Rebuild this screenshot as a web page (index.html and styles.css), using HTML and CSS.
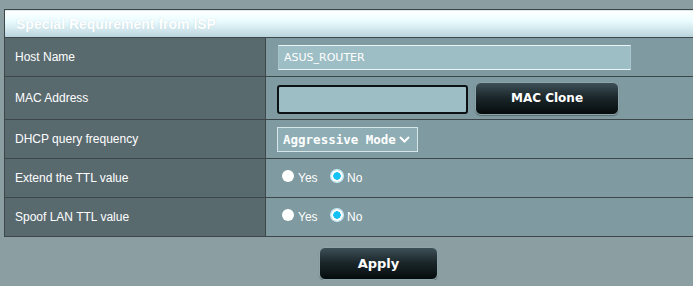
FILE: index.html
```html
<!DOCTYPE html>
<html lang="en">
<head>
    <meta charset="UTF-8">
    <title>WAN - Special Requirement from ISP</title>
    <link rel="stylesheet" href="styles.css">
</head>
<body>
    <table class="form-table">
        <thead>
            <tr>
                <td colspan="2" class="table-title">Special Requirement from ISP</td>
            </tr>
        </thead>
        <tbody>
            <tr>
                <th>Host Name</th>
                <td><input type="text" class="input-text host-name" value="ASUS_ROUTER"></td>
            </tr>
            <tr class="tall">
                <th>MAC Address</th>
                <td>
                    <div class="mac-row">
                        <input type="text" class="input-text mac-input" value="">
                        <button type="button" class="button-gen mac-clone">MAC Clone</button>
                    </div>
                </td>
            </tr>
            <tr>
                <th>DHCP query frequency</th>
                <td>
                    <div class="select-box">
                        <span>Aggressive Mode</span>
                        <svg width="11" height="7" viewBox="0 0 11 7"><path d="M1 1 L5.5 5.5 L10 1" fill="none" stroke="#fff" stroke-width="2"/></svg>
                    </div>
                </td>
            </tr>
            <tr>
                <th>Extend the TTL value</th>
                <td>
                    <label class="radio"><input type="radio" name="ttl_inc">Yes</label>
                    <label class="radio"><input type="radio" name="ttl_inc" checked>No</label>
                </td>
            </tr>
            <tr>
                <th>Spoof LAN TTL value</th>
                <td>
                    <label class="radio"><input type="radio" name="ttl_spoof">Yes</label>
                    <label class="radio"><input type="radio" name="ttl_spoof" checked>No</label>
                </td>
            </tr>
        </tbody>
    </table>

    <div class="apply-row">
        <button type="button" class="button-gen apply">Apply</button>
    </div>
</body>
</html>
```

FILE: styles.css
```css
html, body {
    margin: 0;
    overflow: hidden;
}
body {
    background: #8b9fa3;
    font-family: "Liberation Sans", Arial, sans-serif;
    padding: 9px 0 0 4px;
    width: 689px;
}
.form-table {
    width: 692px;
    border-collapse: collapse;
    border: 1px solid #3d4649;
}
.form-table td, .form-table th {
    border: 1px solid #3d4649;
    padding: 0;
}
.form-table .table-title {
    height: 27px;
    background: linear-gradient(to bottom, #ffffff 0%, #e9fcff 40%, #b9d3db 100%);
    color: #fff;
    font-weight: bold;
    font-size: 14px;
    padding-left: 11px;
    text-align: left;
    text-shadow: 0 0 1px rgba(150, 180, 190, 0.5);
}
.form-table th {
    width: 250px;
    height: 38px;
    background: #596a6f;
    color: #fff;
    font-size: 12px;
    font-weight: normal;
    text-align: left;
    padding-left: 10px;
}
.form-table td {
    background: #7f9aa0;
    padding-left: 11px;
}
.form-table tr.tall th {
    height: 42px;
}
.input-text {
    box-sizing: border-box;
    background: #9dbec5;
    color: #fff;
    font-family: "DejaVu Sans", Verdana, sans-serif;
    font-size: 11px;
    outline: none;
}
.host-name {
    width: 353px;
    height: 25px;
    margin-left: 1px;
    border: 1px solid #e8f6f8;
    border-left-color: #a9c4ca;
    border-right-color: #a9c4ca;
    padding: 0 5px;
}
.mac-row {
    display: flex;
    align-items: center;
    gap: 7px;
}
.mac-input {
    width: 191px;
    height: 29px;
    margin-top: 3px;
    border: 2px solid #0c1214;
    border-radius: 3px;
    padding: 0 4px;
}
.mac-input::before {
    content: "";
}
.button-gen {
    background: linear-gradient(to bottom, #3d5057 0%, #1c282c 45%, #050b0c 100%);
    border: 1px solid #8da5aa;
    border-radius: 6px;
    color: #fff;
    font-family: "DejaVu Sans", Verdana, sans-serif;
    font-weight: bold;
    font-size: 12px;
    cursor: pointer;
    box-shadow: 0 1px 1px rgba(0, 0, 0, 0.3);
}
.mac-clone {
    width: 144px;
    height: 33px;
}
.select-box {
    display: inline-flex;
    align-items: center;
    gap: 3px;
    box-sizing: border-box;
    height: 25px;
    width: 141px;
    border: 1px solid #d7e6e9;
    background: #8eadb4;
    color: #fff;
    font-family: "DejaVu Sans Mono", monospace;
    font-weight: bold;
    font-size: 12.5px;
    padding-left: 5px;
    vertical-align: middle;
}
.radio {
    display: inline-flex;
    align-items: center;
    color: #fff;
    font-size: 12px;
    margin-right: 4px;
    position: relative;
    top: 1px;
}
.radio input {
    appearance: none;
    -webkit-appearance: none;
    width: 12px;
    height: 12px;
    margin: 0 4px 0 5px;
    border-radius: 50%;
    background: #fff;
    position: relative;
    top: -2px;
}
.radio input:checked {
    background: radial-gradient(circle, #16c2f4 0 3.5px, #fff 4px);
    box-shadow: 0 0 0 1px #c3eefb;
}
.apply-row {
    display: flex;
    padding-top: 10px;
    padding-left: 315px;
}
.apply {
    width: 119px;
    height: 33px;
    font-size: 13px;
}
```
